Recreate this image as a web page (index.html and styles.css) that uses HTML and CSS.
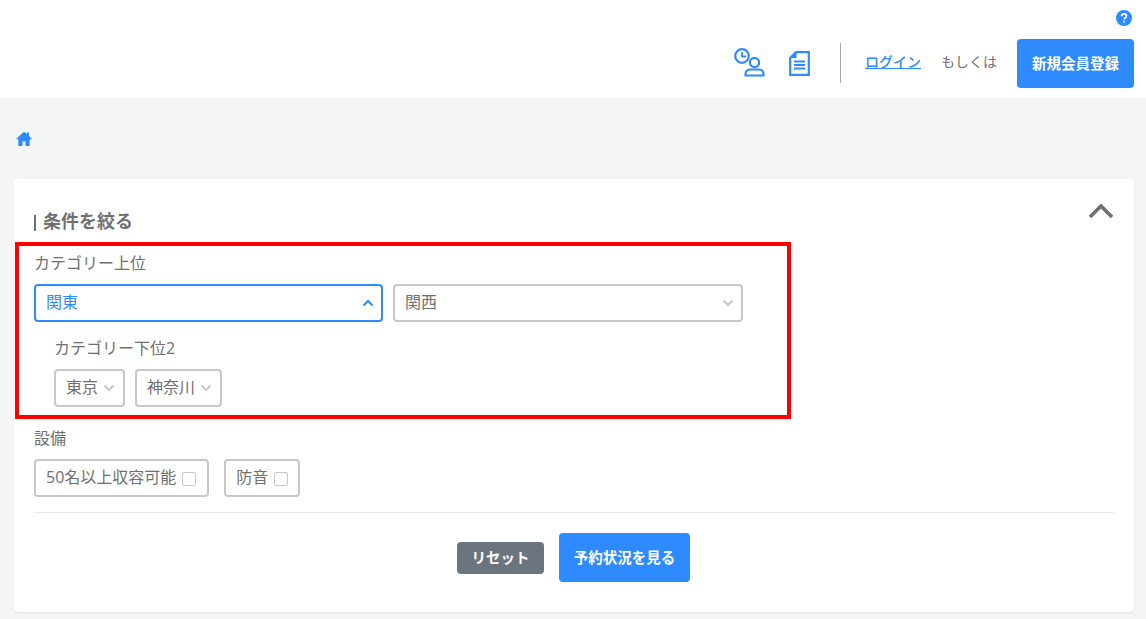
FILE: index.html
```html
<!DOCTYPE html>
<html lang="ja">
<head>
<meta charset="utf-8">
<title>条件を絞る</title>
<link rel="stylesheet" href="styles.css">
</head>
<body>
<header class="header">
  <div class="help-row">
    <svg class="help" viewBox="0 0 16 16" width="16" height="16"><circle cx="8" cy="8" r="8" fill="#2e8bff"/><path d="M5.600 6.200c0-1.500 1-2.400 2.500-2.400s2.400.9 2.400 2.100c0 1-.5 1.500-1.300 2-.7.500-.9.800-.9 1.500" fill="none" stroke="#fff" stroke-width="1.700"/><rect x="7" y="10.800" width="1.800" height="1.800" fill="#fff"/></svg>
  </div>
  <div class="nav-row">
    <svg class="icon-user" viewBox="0 0 31 30" width="31" height="30"><g fill="none" stroke="#2e8bff" stroke-width="2.200"><circle cx="8" cy="9" r="6.800"/><path d="M8 5v4.500h4" stroke-width="1.800"/><circle cx="20.500" cy="15.500" r="4.600"/><path d="M11.500 28.500v-1.500c0-3 2.500-4.500 5-4.500h8c2.500 0 5 1.500 5 4.500v1.500z"/></g></svg>
    <svg class="icon-doc" viewBox="0 0 21 25" width="21" height="25"><path d="M7 1.200h12.800v22.600H1.200V7z" fill="none" stroke="#2e8bff" stroke-width="2.200"/><path d="M7.500 1v6H1.500z" fill="#2e8bff"/><path d="M5 10.500h11M5 14h11M5 17.500h11" stroke="#2e8bff" stroke-width="1.800" fill="none"/></svg>
    <span class="vline"></span>
    <a class="login" href="#">ログイン</a>
    <span class="or">もしくは</span>
    <a class="btn btn-blue btn-register" href="#">新規会員登録</a>
  </div>
</header>
<main class="main">
  <nav class="crumb">
    <svg viewBox="0 0 18 16" width="18" height="16"><path d="M9 .8 0.800 8.200h2.500V15h4.200v-4.600h3V15h4.200V8.200h2.500L14 4.900V1.600h-2.200v1.300z" fill="#2e8bff"/></svg>
  </nav>
  <section class="card">
    <h2 class="title"><span class="bar"></span>条件を絞る</h2>
    <svg class="collapse" viewBox="0 0 26 16" width="26" height="16"><path d="M2 14 13 3l11 11" fill="none" stroke="#6e6e6e" stroke-width="3.600"/></svg>
    <div class="label label-top">カテゴリー上位</div>
    <div class="row">
      <div class="select select-wide select-active">関東<svg class="chev" viewBox="0 0 12 8" width="12" height="8"><path d="M1.500 6.500 6 2l4.500 4.500" fill="none" stroke="#2e8bff" stroke-width="2"/></svg></div>
      <div class="select select-wide">関西<svg class="chev" viewBox="0 0 12 8" width="12" height="8"><path d="M1.500 1.500 6 6l4.500-4.500" fill="none" stroke="#c8c8c8" stroke-width="2"/></svg></div>
    </div>
    <div class="sub">
      <div class="label">カテゴリー下位2</div>
      <div class="row">
        <div class="select">東京<svg class="chev" viewBox="0 0 12 8" width="12" height="8"><path d="M1.500 1.500 6 6l4.500-4.500" fill="none" stroke="#c8c8c8" stroke-width="2"/></svg></div>
        <div class="select">神奈川<svg class="chev" viewBox="0 0 12 8" width="12" height="8"><path d="M1.500 1.500 6 6l4.500-4.500" fill="none" stroke="#c8c8c8" stroke-width="2"/></svg></div>
      </div>
    </div>
    <div class="label label-equip">設備</div>
    <div class="row row-check">
      <div class="select">50名以上収容可能<span class="check"></span></div>
      <div class="select">防音<span class="check"></span></div>
    </div>
    <div class="actions">
      <a class="btn btn-gray" href="#">リセット</a>
      <a class="btn btn-blue btn-view" href="#">予約状況を見る</a>
    </div>
    <div class="highlight"></div>
  </section>
</main>
</body>
</html>
```
FILE: styles.css
```css
* { box-sizing: border-box; }
html, body { margin: 0; padding: 0; }
body {
  width: 1146px;
  height: 619px;
  overflow: hidden;
  background: #f4f6f6;
  color: #707070;
  font-family: "Open Sans", "Noto Sans CJK JP", sans-serif;
  font-size: 16px;
}
a { text-decoration: none; }
.header {
  height: 98px;
  background: #fff;
  padding: 10px 12px 0 0;
}
.help-row { display: flex; justify-content: flex-end; height: 29px; }
.help { display: block; margin-right: 2px; }
.nav-row { display: flex; align-items: center; height: 49px; }
.icon-user { margin-left: auto; margin-right: 24px; margin-bottom: 3px; }
.icon-doc { margin-right: 30px; margin-bottom: 1px; }
.vline { width: 1px; height: 40px; background: #a8a8a8; margin-right: 24px; margin-bottom: 1px; }
.login { color: #2e8bff; font-size: 14px; font-weight: 500; text-decoration: underline; margin-right: 20px; margin-bottom: 3px; line-height: 20px; }
.or { font-size: 14px; margin-right: 20px; margin-bottom: 3px; line-height: 20px; }
.btn {
  display: flex;
  align-items: center;
  justify-content: center;
  color: #fff;
  font-weight: 700;
  font-size: 14.500px;
  border-radius: 4px;
}
.btn-blue { background: #2e8bff; }
.btn-register { width: 117px; height: 49px; padding-bottom: 2px; }
.main { padding: 0 12px 0 14px; }
.crumb { height: 81px; padding-top: 33px; }
.crumb svg { display: block; margin-left: 1px; }
.card {
  position: relative;
  height: 433px;
  background: #fff;
  border-radius: 4px;
  box-shadow: 0 1px 2px rgba(0, 0, 0, .08);
  padding: 29px 20px 0;
}
.title {
  display: flex;
  align-items: center;
  margin: 0;
  height: 26px;
  padding-bottom: 2px;
  font-size: 18px;
  font-weight: 700;
  color: #707070;
}
.bar { width: 2px; height: 16px; background: #707070; margin-top: 6px; margin-right: 7px; }
.collapse { position: absolute; top: 24px; right: 20px; }
.label { height: 24px; line-height: 24px; font-size: 16px; }
.label-top { margin-top: 17px; }
.row { display: flex; gap: 10px; margin-top: 9px; }
.select {
  display: flex;
  align-items: center;
  height: 38px;
  padding: 0 10px 4px;
  background: #fff;
  border: 2px solid #c8c8c8;
  border-radius: 4px;
  font-size: 16px;
  color: #707070;
}
.select-wide { width: 349px; }
.select-wide + .select-wide { width: 350px; }
.select-wide .chev { margin-left: auto; margin-right: -3px; margin-top: 4px; }
.select-active { border-color: #2e8bff; color: #2e8bff; }
.chev { margin-left: 5px; margin-top: 4px; flex: none; }
.sub { padding-left: 20px; margin-top: 14px; }
.sub .select { padding-right: 8px; }
.label-equip { margin-top: 19px; }
.row-check { gap: 15px; }
.row-check .select:first-child { padding-right: 11px; }
.check {
  width: 14px;
  height: 14px;
  margin-left: 6px;
  margin-top: 6px;
  border: 1px solid #c8c8c8;
  border-radius: 2px;
  background: #fff;
}
.actions {
  display: flex;
  align-items: center;
  justify-content: center;
  gap: 15px;
  height: 70px;
  margin-top: 15px;
  padding: 20px 1px 0 0;
  border-top: 1px solid #e8e8e8;
}
.btn-gray { width: 87px; height: 32px; background: #6c757d; padding-bottom: 3px; }
.btn-view { width: 131px; height: 49px; padding-bottom: 3px; }
.highlight {
  position: absolute;
  left: 1px;
  top: 63px;
  width: 776px;
  height: 177px;
  border: 4px solid #ff0000;
  pointer-events: none;
}
```
